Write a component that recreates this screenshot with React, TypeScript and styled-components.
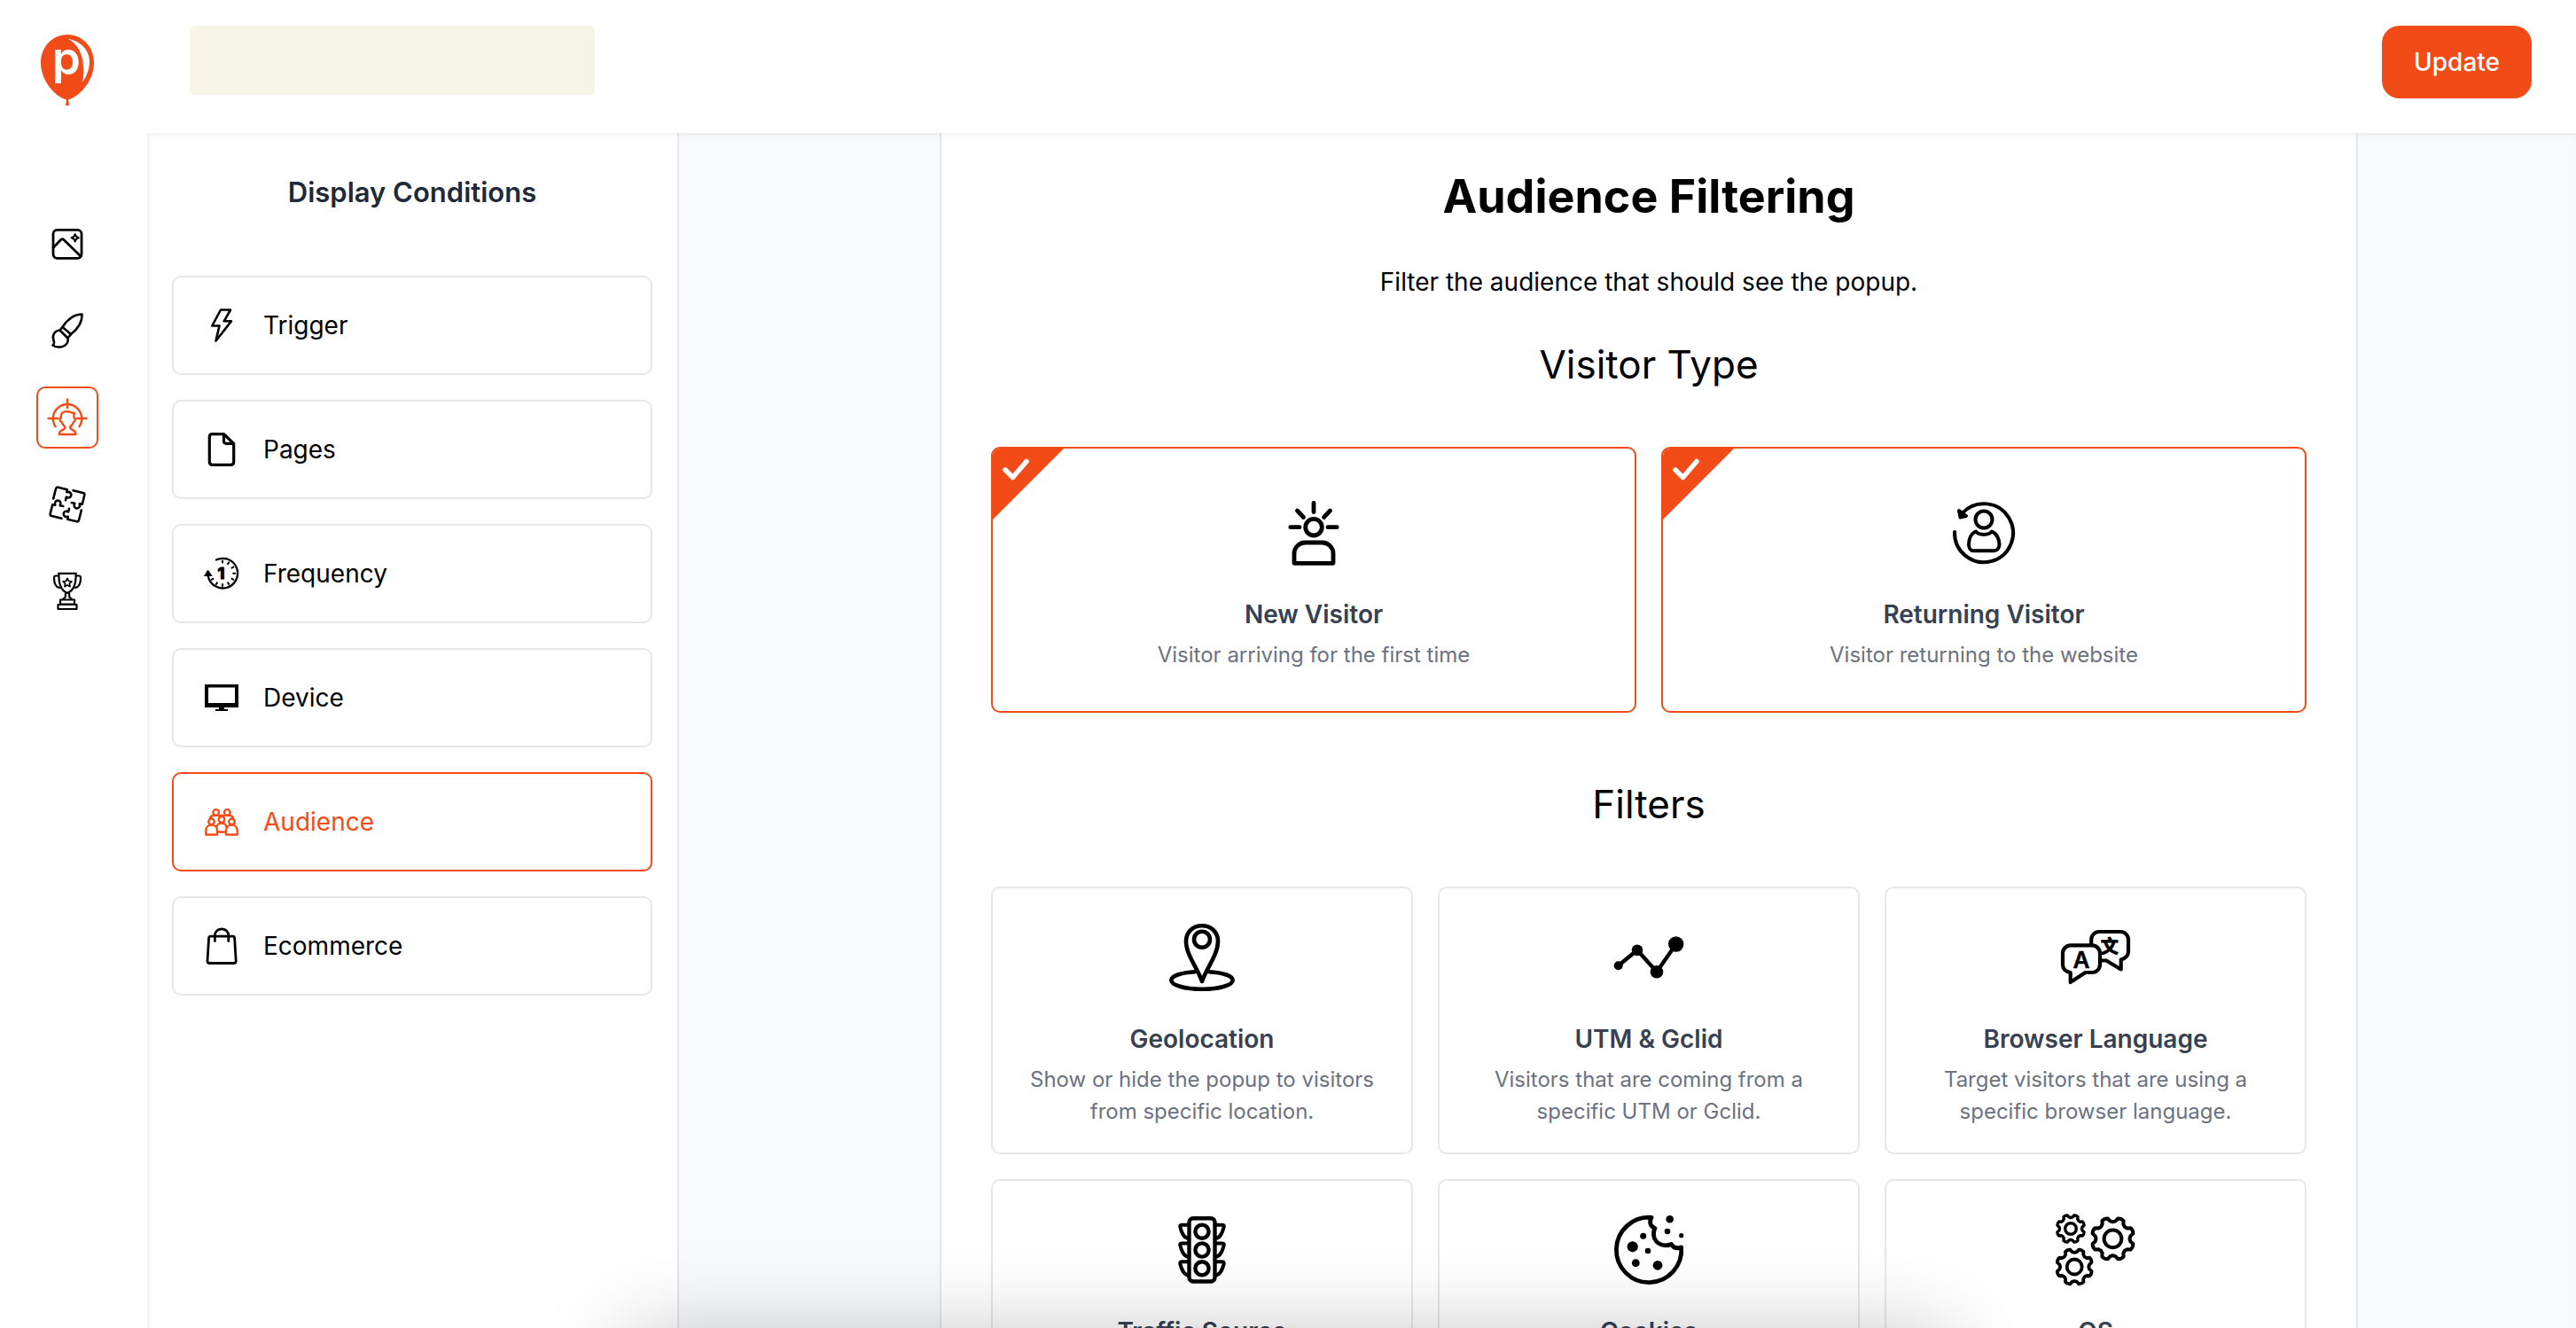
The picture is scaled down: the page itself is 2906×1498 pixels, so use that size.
import React from "react";
import styled, { createGlobalStyle } from "styled-components";

const ACCENT = "#f34b17";
const LINE = "#e5e7eb";

const GlobalStyle = createGlobalStyle`
  *, *::before, *::after { box-sizing: border-box; }
  body {
    margin: 0;
    background: #fff;
    color: #000;
    font-family: Inter, "Liberation Sans", sans-serif;
    font-size: 28px;
    line-height: 42px;
  }
  h1, h2, h3, p, ul { margin: 0; padding: 0; }
  button { font: inherit; color: inherit; cursor: pointer; }
`;

const Shell = styled.div`
  display: grid;
  grid-template-columns: 166px minmax(0, 1fr);
  grid-template-rows: 150px minmax(0, 1fr);
  height: 100vh;
  overflow: hidden;
`;

const Brand = styled.a`
  display: flex;
  justify-content: center;
  padding: 39px 14px 0 0;
`;

const Header = styled.header`
  display: flex;
  align-items: flex-start;
  justify-content: space-between;
  padding: 29px 50px 0 48px;
`;

const CampaignName = styled.div`
  width: 457px;
  height: 78px;
  border-radius: 6px;
  background: #f6f4e6;
`;

const UpdateButton = styled.button`
  padding: 20px 36px;
  border: 0;
  border-radius: 20px;
  background: ${ACCENT};
  color: #fff;
  font-weight: 500;
`;

const Rail = styled.nav`
  display: flex;
  flex-direction: column;
  align-items: center;
  gap: 28px;
  padding: 90px 14px 0 0;
`;

const RailButton = styled.button<{ $active?: boolean }>`
  display: grid;
  place-items: center;
  width: 70px;
  height: 70px;
  padding: 0;
  border: 2px solid ${(p) => (p.$active ? ACCENT : "transparent")};
  border-radius: 10px;
  background: none;
  color: ${(p) => (p.$active ? ACCENT : "#000")};
`;

const Workspace = styled.div`
  position: relative;
  display: flex;
  min-height: 0;
  background: #f8fafc;

  &::after {
    content: "";
    position: absolute;
    inset: 0;
    pointer-events: none;
    box-shadow: inset 2px 2px 4px rgba(0, 0, 0, 0.07);
  }
`;

const Panel = styled.aside`
  flex: 0 0 600px;
  padding: 46px 28px 28px;
  border-right: 2px solid ${LINE};
  background: #fff;
`;

const PanelTitle = styled.h2`
  margin-bottom: 73px;
  color: #1f2937;
  font-size: 31px;
  line-height: 42px;
  font-weight: 600;
  text-align: center;
`;

const Menu = styled.ul`
  display: flex;
  flex-direction: column;
  gap: 28px;
  list-style: none;
`;

const MenuButton = styled.button<{ $active?: boolean }>`
  display: flex;
  align-items: center;
  gap: 26px;
  width: 100%;
  height: 112px;
  padding: 0 33px;
  border: 2px solid ${(p) => (p.$active ? ACCENT : LINE)};
  border-radius: 10px;
  background: #fff;
  color: ${(p) => (p.$active ? ACCENT : "#000")};
  text-align: left;
`;

const Stage = styled.main`
  flex: 1;
  display: flex;
  justify-content: center;
  min-width: 0;
  padding-left: 48px;
  overflow-y: auto;
  scrollbar-width: none;
`;

const Column = styled.div`
  flex: 0 1 1600px;
  height: max-content;
  min-height: 100%;
  padding: 40px 56px;
  border: solid ${LINE};
  border-width: 0 2px;
  background: #fff;
`;

const PageTitle = styled.h1`
  margin-bottom: 43px;
  font-size: 52px;
  line-height: 64px;
  font-weight: 700;
  text-align: center;
`;

const Lead = styled.p`
  margin-bottom: 45px;
  text-align: center;
`;

const SectionTitle = styled.h2`
  margin-bottom: 66px;
  font-size: 44px;
  line-height: 54px;
  font-weight: 400;
  text-align: center;
`;

const CardGrid = styled.div<{ $columns: number }>`
  display: grid;
  grid-template-columns: repeat(${(p) => p.$columns}, minmax(0, 1fr));
  grid-auto-rows: minmax(300px, auto);
  gap: 28px;

  & + h2 { margin-top: 76px; }
`;

const CardButton = styled.button<{ $selected?: boolean }>`
  position: relative;
  display: flex;
  flex-direction: column;
  align-items: center;
  justify-content: ${(p) => (p.$selected ? "center" : "flex-start")};
  padding: 28px;
  overflow: hidden;
  border: 2px solid ${(p) => (p.$selected ? ACCENT : LINE)};
  border-radius: 10px;
  background: #fff;
  text-align: center;
`;

const Corner = styled.span`
  position: absolute;
  top: 0;
  left: 0;
  width: 80px;
  height: 80px;
  background: ${ACCENT};
  clip-path: polygon(0 0, 100% 0, 0 100%);

  svg { display: block; }
`;

const CardTitle = styled.span`
  margin-top: 21px;
  color: #374151;
  font-weight: 600;
`;

const CardText = styled.span`
  max-width: 420px;
  margin-top: 7px;
  color: #6b7280;
  font-size: 24px;
  line-height: 36px;
`;

const BottomShade = styled.div`
  position: fixed;
  top: 100%;
  left: 710px;
  right: 710px;
  height: 240px;
  pointer-events: none;
  box-shadow: 0 10px 100px rgba(0, 0, 0, 0.25);
`;

type Drawn = { children: React.ReactNode; w?: number };

const SmallIcon = ({ children, w = 2.8 }: Drawn) => (
  <svg width="42" height="42" viewBox="0 0 42 42" overflow="visible" fill="none" stroke="currentColor"
    strokeWidth={w} strokeLinecap="round" strokeLinejoin="round" aria-hidden="true">
    {children}
  </svg>
);

const LargeIcon = ({ children, w = 4.4 }: Drawn) => (
  <svg width="100" height="100" viewBox="0 0 100 100" fill="none" stroke="#000"
    strokeWidth={w} strokeLinecap="round" strokeLinejoin="round" aria-hidden="true">
    {children}
  </svg>
);

const Balloon = () => (
  <svg width="60" height="80" viewBox="0 0 60 80" overflow="visible" aria-hidden="true">
    <path fill={ACCENT} d="M30 0C47 0 60 14 60 32C60 50 46 69 31 73.500L32 80H28L29 73.500C14 69 0 50 0 32C0 14 13 0 30 0Z" />
    <path fill="#fff" d="M31 5C45 7 55 18 55 30C55 40 51 48 47 54C48.500 46 49 38 47 28C45 18 40 10 31 5Z" />
    <text x="13" y="45" fill="#fff" fontFamily="Inter, sans-serif" fontSize="51" fontWeight="600">p</text>
  </svg>
);

const DesignIcon = () => (
  <SmallIcon>
    <rect x="5" y="5.300" width="32" height="32" rx="4.500" />
    <path d="M5 25.500L13.500 16.500Q15.300 15 17 16.500L36 35" />
    <path strokeWidth="2.200" d="M29.700 10.300Q30.500 13.500 33.700 14.300Q30.500 15.100 29.700 18.300Q28.900 15.100 25.700 14.300Q28.900 13.500 29.700 10.300Z" />
  </SmallIcon>
);

const BrushIcon = () => (
  <SmallIcon w={2.6}>
    <path d="M15.500 17C20 10 27 2.500 37.500 2.500C38 12 32 19.500 25 25Z" />
    <path d="M15.500 17L12.500 20.500L21.500 29.500L25 25" />
    <path d="M12.500 20.500C6 21 3.500 27 5.500 32C6.500 35 6.500 36 4.500 37.500C10 41 18 40 21 34.500Q22 32 21.500 29.500" />
  </SmallIcon>
);

const TargetIcon = () => (
  <SmallIcon w={2.4}>
    <path d="M7.500 31.200A16.200 16.200 0 1 1 34.500 31.200" />
    <path d="M21 .500V10M-.500 22H10M32 22H42.500" />
    <path d="M14.500 26C12 25 12 21.500 14 21C13 15.500 17 13.800 21 14.200C23 14 26 16 29 16C28.300 17.500 28.300 20 28.500 21C30.500 22 30 25.500 28 26C27.500 28.500 25.500 30 24 31.500C24 34 26 34.500 28 35.500C30 36.500 30.500 38 30.500 40H11.800C11.800 38 12.500 36.500 14.500 35.500C17 34.500 18.500 34 18.500 31.500C17 30 15 28.500 14.500 26Z" />
  </SmallIcon>
);

const PuzzleIcon = () => (
  <SmallIcon w={2.6}>
    {[0, 90, 180, 270].map((turn) => (
      <path key={turn} transform={`rotate(${turn} 21 21)`}
        d="M5.200 14.500L8 3.300Q8.600 1.300 10.500 1.700L20.800 4.200L20.200 7.300C23.500 6 26 8.300 25.200 11.200C24.300 14 21.500 13.500 19.800 12.700L19 16.300" />
    ))}
  </SmallIcon>
);

const star = (cx: number, cy: number, outer: number, inner: number) =>
  Array.from({ length: 10 }, (_, i) => {
    const r = i % 2 ? inner : outer;
    const a = (Math.PI / 5) * i - Math.PI / 2;
    return `${cx + r * Math.cos(a)},${cy + r * Math.sin(a)}`;
  }).join(" ");

const TrophyIcon = () => (
  <SmallIcon w={2.2}>
    <path d="M11 .800H31M11.500 1C11 12 13 20 21 23C29 20 31 12 30.500 1" />
    <path d="M11 3.500H8Q5.800 3.500 6 6C6 11 7 16 12 17M31 3.500H34Q36.200 3.500 36 6C36 11 35 16 30 17" />
    <path d="M19 23.500L18.700 27.500L16 30M23 23.500L23.300 27.500L26 30" />
    <path d="M13 30.500H29V35.500H13ZM10.500 36H31.500V41H10.500Z" />
    <polygon strokeWidth="1.700" points={star(21, 11.500, 5.200, 2.500)} />
  </SmallIcon>
);

const TriggerIcon = () => (
  <SmallIcon w={2.6}>
    <path d="M20 3.500H31L23.700 16.300H32L14.500 38.500L18.500 21.500H10.300Z" />
  </SmallIcon>
);

const PagesIcon = () => (
  <SmallIcon w={3.2}>
    <path d="M10.500 3.600H23.500L34.700 14.500V35Q34.700 38.400 31.300 38.400H10.700Q7.300 38.400 7.300 35V7Q7.300 3.600 10.500 3.600Z" />
    <path d="M23.500 4.500V11.500Q23.500 14.300 26.500 14.300H34" />
  </SmallIcon>
);

const FrequencyIcon = () => (
  <SmallIcon w={2.3}>
    <path d="M15 5.500A16.800 16.800 0 1 1 5.800 24" />
    <path fill="currentColor" strokeWidth="1" d="M5.700 17.500L10 23.500H2Z" />
    {[0, 30, 60, 90, 120, 150, 180, 210, 240].map((turn) => (
      <path key={turn} strokeWidth="2" transform={`rotate(${turn} 22 20.700)`} d="M22 6.500V8.500" />
    ))}
    <text x="20.500" y="27" textAnchor="middle" fill="currentColor" stroke="currentColor" strokeWidth="1"
      fontFamily="Inter, sans-serif" fontSize="18" fontWeight="800">1</text>
  </SmallIcon>
);

const DeviceIcon = () => (
  <SmallIcon>
    <path stroke="none" fill="currentColor" fillRule="evenodd"
      d="M2 6H40V32H24V34H28V36H14V34H18V32H2ZM6 9.500V27H36V9.500Z" />
  </SmallIcon>
);

const AudienceIcon = () => (
  <SmallIcon w={2.3}>
    <circle cx="14.700" cy="10.500" r="3.300" />
    <circle cx="27.300" cy="10.500" r="3.300" />
    <circle cx="9.500" cy="20.800" r="3.300" />
    <circle cx="21" cy="18.500" r="3.300" />
    <circle cx="32.500" cy="20.800" r="3.300" />
    <path d="M3.300 35.500V31C3.300 22.500 16 22.500 16 31V35.500ZM26 35.500V31C26 22.500 38.700 22.500 38.700 31V35.500Z" />
    <path d="M15.500 27C16 21 26 21 26.500 27M16 32.500H26M8 17C8.500 14.500 11 13.500 14 14M34 17C33.500 14.500 31 13.500 28 14M18 14.500Q21 13 24 14.500" />
  </SmallIcon>
);

const BagIcon = () => (
  <SmallIcon>
    <path d="M9 10.200H33.500Q35.500 10.200 35.600 12L37.200 38Q37.200 40.500 35 40.500H7.300Q5 40.500 5 38L6.600 12Q6.800 10.200 9 10.200Z" />
    <path d="M13.400 15.500V9.500C13.400-.700 28.800-.700 28.800 9.500V15.500" />
  </SmallIcon>
);

const NewVisitorIcon = () => (
  <LargeIcon w={4.8}>
    <circle cx="50" cy="43.700" r="9.300" />
    <path d="M50 16.300V26.500M31.500 25L38.500 32.500M68.500 25L61.500 32.500M23.800 43.700H34M66 43.700H76.200" />
    <path d="M28 84.300V73.500A12.500 12.500 0 0 1 40.500 61H59.500A12.500 12.500 0 0 1 72 73.500V84.300Z" />
  </LargeIcon>
);

const ReturningIcon = () => (
  <LargeIcon w={4}>
    <path d="M17 49A33 33 0 1 0 26 27.500" />
    <path fill="#000" d="M22 25L23.500 32.500L30 31Z" />
    <circle cx="50" cy="35" r="9.500" />
    <path d="M41 48.500C35 51 33 58 33 63C33 67 35 70.300 38 70.300H62C65 70.300 67.500 67 67.500 63C67.500 58 65 51 59 48.500C56 53 44 53 41 48.500Z" />
  </LargeIcon>
);

const GeoIcon = () => (
  <LargeIcon w={4.6}>
    <path d="M50 77C45 62 32 47 32 32C32 21 40 14.200 50 14.200C60 14.200 68 21 68 32C68 47 55 62 50 77Z" />
    <circle cx="50" cy="29.700" r="9" />
    <path d="M42 66.200C26 67 15.300 71 15.300 75.700C15.300 81 30 85.800 50 85.800C70 85.800 84.700 81 84.700 75.700C84.700 71 74 67 58 66.200" />
  </LargeIcon>
);

const UtmIcon = () => (
  <LargeIcon>
    <path d="M15.700 59.300L37 41.700L59 66.300L80.700 35" />
    <g fill="#000" stroke="none">
      <circle cx="15.700" cy="59.300" r="5" />
      <circle cx="37" cy="41.700" r="6.300" />
      <circle cx="59" cy="66.300" r="7.300" />
      <circle cx="80.700" cy="35" r="8.700" />
    </g>
  </LargeIcon>
);

const LanguageIcon = () => (
  <LargeIcon w={4.2}>
    <path d="M22 36.300H46A9 9 0 0 1 55 45.300V58A9 9 0 0 1 46 67H38.500L21.700 78V67C16 66 13 63 13 58V45.300A9 9 0 0 1 22 36.300Z" />
    <path d="M45.200 35V30A9 9 0 0 1 54.200 21H78A9 9 0 0 1 87 30V43C87 48 84 51 78.700 52.500V63.500L62 53.500H57" />
    <g fill="#000" stroke="#000" textAnchor="middle">
      <text x="34" y="61.500" strokeWidth="0.500" fontFamily="Inter, sans-serif" fontSize="26" fontWeight="600">A</text>
      <text x="65.700" y="45" strokeWidth="1" fontFamily='"Noto Sans CJK SC", sans-serif' fontSize="20" fontWeight="700">文</text>
    </g>
  </LargeIcon>
);

const TrafficIcon = () => (
  <LargeIcon>
    <rect x="35.500" y="14.300" width="29" height="71.200" rx="4.500" />
    {[29.2, 50, 70.8].map((y) => (
      <g key={y}>
        <circle cx="50" cy={y} r="7.600" />
        <path strokeWidth="4" d={`M35 ${y - 7.5}H27Q24.500 ${y - 7.5} 25.500 ${y - 4.5}C27 ${y + 1} 29 ${y + 7} 35 ${y + 8}M65 ${y - 7.5}H73Q75.500 ${y - 7.5} 74.500 ${y - 4.5}C73 ${y + 1} 71 ${y + 7} 65 ${y + 8}`} />
      </g>
    ))}
  </LargeIcon>
);

const CookieIcon = () => (
  <LargeIcon w={4.8}>
    <path d="M53 13.300A36.700 36.700 0 1 0 86.700 47C82 48.500 78 48 75.500 43.500C67 47 58 43 56 35.500C55 31 55 29 57 25.500C51 23 50.500 18.500 53 13.300Z" />
    <g fill="#000" stroke="none">
      <circle cx="73.700" cy="15.300" r="4.300" />
      <circle cx="71" cy="29" r="3.300" />
      <circle cx="86.700" cy="33.700" r="2.600" />
      <circle cx="43.700" cy="34.300" r="3.500" />
      <circle cx="31.700" cy="46.300" r="6.100" />
      <circle cx="49" cy="51" r="3.300" />
      <circle cx="35.300" cy="64.700" r="4.400" />
      <circle cx="60" cy="67.300" r="5.400" />
    </g>
  </LargeIcon>
);

/* Outline of an eight-toothed wheel whose teeth sit either side of each axis. */
const gear = (cx: number, cy: number, r: number) => {
  const at = (deg: number, k: number) => {
    const a = (deg * Math.PI) / 180;
    return `${(cx + r * k * Math.cos(a)).toFixed(2)} ${(cy + r * k * Math.sin(a)).toFixed(2)}`;
  };
  let d = `M${at(0, 0.79)}`;
  for (let i = 0; i < 8; i += 1) {
    const b = i * 45;
    d += `L${at(b + 9, 0.84)}L${at(b + 14, 0.98)}Q${at(b + 22.5, 1.04)} ${at(b + 31, 0.98)}L${at(b + 36, 0.84)}L${at(b + 45, 0.79)}`;
  }
  return `${d}Z`;
};

const GearsIcon = () => (
  <LargeIcon w={3.4}>
    <path d={gear(22, 26, 15.800)} />
    <circle cx="22" cy="26" r="6.300" />
    <path strokeWidth="4" d={gear(69.500, 37.300, 24)} />
    <circle strokeWidth="4" cx="69.500" cy="37.300" r="9.900" />
    <path strokeWidth="3.800" d={gear(26.200, 69, 20.300)} />
    <circle strokeWidth="3.800" cx="26.200" cy="69" r="8.500" />
  </LargeIcon>
);

const rail = [
  { label: "Template", Icon: DesignIcon },
  { label: "Design", Icon: BrushIcon },
  { label: "Targeting", Icon: TargetIcon, active: true },
  { label: "Integrations", Icon: PuzzleIcon },
  { label: "Goals", Icon: TrophyIcon },
];

const menu = [
  { label: "Trigger", Icon: TriggerIcon },
  { label: "Pages", Icon: PagesIcon },
  { label: "Frequency", Icon: FrequencyIcon },
  { label: "Device", Icon: DeviceIcon },
  { label: "Audience", Icon: AudienceIcon, active: true },
  { label: "Ecommerce", Icon: BagIcon },
];

type CardData = { title: string; text?: string; Icon: () => React.ReactElement };

const visitorTypes: CardData[] = [
  { title: "New Visitor", text: "Visitor arriving for the first time", Icon: NewVisitorIcon },
  { title: "Returning Visitor", text: "Visitor returning to the website", Icon: ReturningIcon },
];

const filters: CardData[] = [
  { title: "Geolocation", text: "Show or hide the popup to visitors from specific location.", Icon: GeoIcon },
  { title: "UTM & Gclid", text: "Visitors that are coming from a specific UTM or Gclid.", Icon: UtmIcon },
  { title: "Browser Language", text: "Target visitors that are using a specific browser language.", Icon: LanguageIcon },
  { title: "Traffic Source", Icon: TrafficIcon },
  { title: "Cookies", Icon: CookieIcon },
  { title: "OS", Icon: GearsIcon },
];

const Card = ({ title, text, Icon, selected }: CardData & { selected?: boolean }) => (
  <CardButton type="button" $selected={selected} aria-pressed={!!selected}>
    {selected && (
      <Corner>
        <svg width="80" height="80" viewBox="0 0 80 80" fill="none" stroke="#fff" strokeWidth="5.500"
          strokeLinecap="round" strokeLinejoin="round" aria-hidden="true">
          <path d="M14 24L22.500 32.500L38 14.500" />
        </svg>
      </Corner>
    )}
    <Icon />
    <CardTitle>{title}</CardTitle>
    {text && <CardText>{text}</CardText>}
  </CardButton>
);

export default function App() {
  return (
    <>
      <GlobalStyle />
      <Shell>
        <Brand href="#" aria-label="Home">
          <Balloon />
        </Brand>
        <Header>
          <CampaignName />
          <UpdateButton type="button">Update</UpdateButton>
        </Header>
        <Rail aria-label="Editor sections">
          {rail.map(({ label, Icon, active }) => (
            <RailButton key={label} type="button" aria-label={label} $active={active}>
              <Icon />
            </RailButton>
          ))}
        </Rail>
        <Workspace>
          <Panel>
            <PanelTitle>Display Conditions</PanelTitle>
            <Menu>
              {menu.map(({ label, Icon, active }) => (
                <li key={label}>
                  <MenuButton type="button" $active={active}>
                    <Icon />
                    {label}
                  </MenuButton>
                </li>
              ))}
            </Menu>
          </Panel>
          <Stage>
            <Column>
              <PageTitle>Audience Filtering</PageTitle>
              <Lead>Filter the audience that should see the popup.</Lead>
              <SectionTitle>Visitor Type</SectionTitle>
              <CardGrid $columns={2}>
                {visitorTypes.map((card) => (
                  <Card key={card.title} {...card} selected />
                ))}
              </CardGrid>
              <SectionTitle>Filters</SectionTitle>
              <CardGrid $columns={3}>
                {filters.map((card) => (
                  <Card key={card.title} {...card} />
                ))}
              </CardGrid>
            </Column>
          </Stage>
        </Workspace>
      </Shell>
      <BottomShade />
    </>
  );
}
